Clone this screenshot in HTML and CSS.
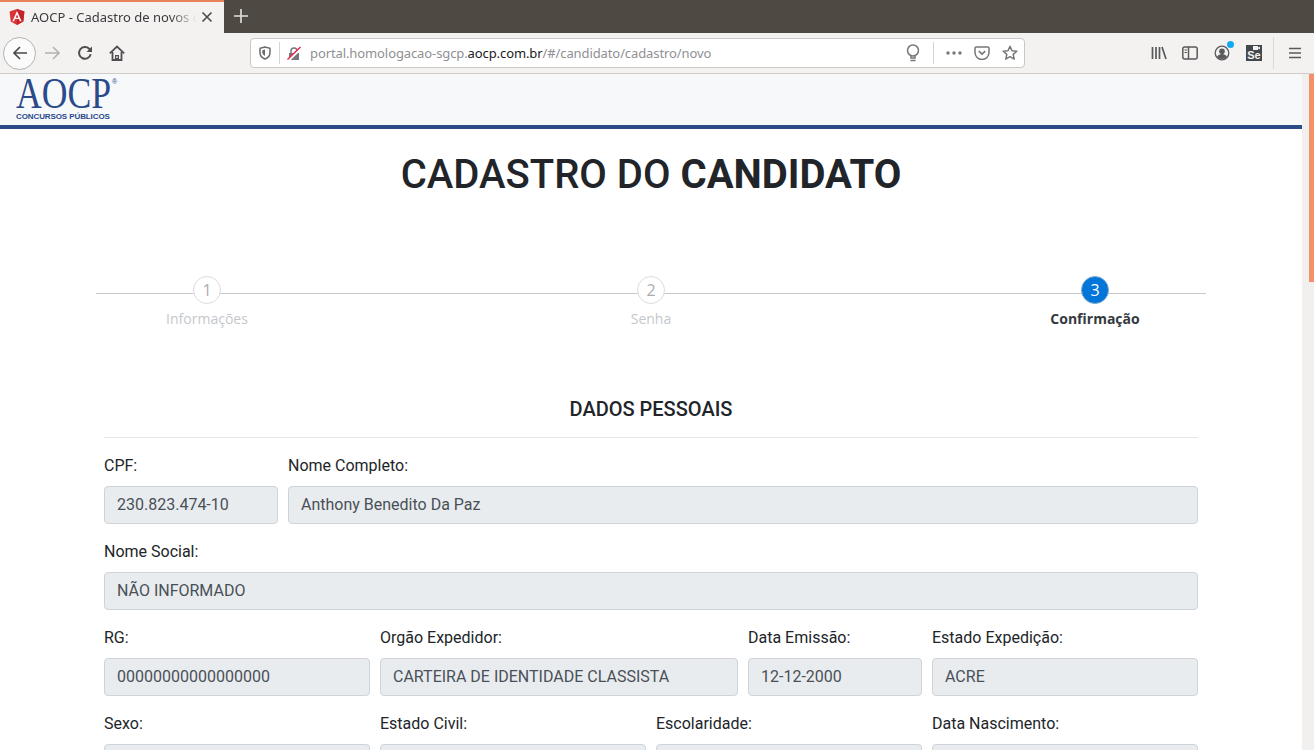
FILE: index.html
```html
<!DOCTYPE html>
<html lang="pt-BR">
<head>
<meta charset="utf-8">
<title>AOCP - Cadastro de novos candidatos</title>
<link rel="stylesheet" href="styles.css">
</head>
<body>
<div class="tabbar">
  <div class="tab">
    <svg class="favicon" viewBox="0 0 16 16"><path d="M8 0 .6 2.6l1.1 9.8L8 16l6.300-3.600 1.100-9.800z" fill="#dd3333"/><path d="M8 0v16l6.300-3.600 1.100-9.800z" fill="#c3242b"/><path d="M8 2 3.400 12.300h1.700l.9-2.300h4l.9 2.300h1.700zm-1.350 6.700L8 5.500l1.350 3.200z" fill="#fff"/></svg>
    <span class="tab-title">AOCP - Cadastro de novos c</span>
    <svg class="tab-close" viewBox="0 0 12 12"><path d="M1.500 1.500l9 9m0-9l-9 9" stroke="#4a4a4f" stroke-width="1.600" fill="none"/></svg>
  </div>
  <svg class="new-tab" viewBox="0 0 14 14"><path d="M7 0v14M0 7h14" stroke="#e4e2dd" stroke-width="1.600" fill="none"/></svg>
</div>
<div class="toolbar">
  <div class="nav-group">
    <button class="back" type="button" aria-label="Voltar"><svg viewBox="0 0 16 16"><path d="M15 8H2M8 2 2 8l6 6" stroke="#4a4a4f" stroke-width="1.700" fill="none"/></svg></button>
    <svg class="tool-icon forward" viewBox="0 0 16 16"><path d="M0 8h14M8 2l6 6-6 6" stroke="#b4b3b1" stroke-width="1.600" fill="none"/></svg>
    <svg class="tool-icon reload" viewBox="0 0 16 16"><path d="M13.700 9.300a5.900 5.900 0 1 1-1.500-5.500l1.800 1.800" stroke="#4f4f52" stroke-width="2" fill="none"/><path d="M15 1.500v5.500H9.500z" fill="#4f4f52"/></svg>
    <svg class="tool-icon home" viewBox="0 0 16 16"><path d="M.8 8.300 8 1.500l7.200 6.800" stroke="#4f4f52" stroke-width="1.800" fill="none"/><path d="M3.500 7v8h9V7" stroke="#4f4f52" stroke-width="1.800" fill="none"/><path d="M6 10h4v5H6z" fill="#4f4f52"/><path d="M7.200 11.200h1.600v1.800H7.200z" fill="#f3f2f0"/></svg>
  </div>
  <div class="urlbar">
    <svg class="url-shield" viewBox="0 0 14 14"><path d="M7 1 2 2.300v4.200c0 3.300 2.300 5.500 5 6.500 2.700-1 5-3.200 5-6.500V2.300z" stroke="#6b6b6d" stroke-width="1.500" fill="none"/><path d="M7 3.500v6.600c-1.500-.8-2.700-2-2.700-3.800V4.200z" fill="#6b6b6d"/></svg>
    <span class="url-sep"></span>
    <svg class="url-lock" viewBox="0 0 14 15"><path d="M4 7V5a3 3 0 0 1 6 0v2" stroke="#77777a" stroke-width="1.500" fill="none"/><path d="M2 7h10v7H2z" fill="#77777a"/><path d="M.5 15 14 2" stroke="#fff" stroke-width="3"/><path d="M.5 13.500 13.500 1" stroke="#f0234b" stroke-width="1.500"/></svg>
    <span class="url-text">portal.homologacao-sgcp.<b>aocp.com.br</b>/#/candidato/cadastro/novo</span>
    <svg class="url-bulb" viewBox="0 0 14 18"><circle cx="7" cy="6.500" r="5.500" stroke="#77777a" stroke-width="1.500" fill="none"/><path d="M5 12v2h4v-2M4.500 16.500h5" stroke="#77777a" stroke-width="1.500" fill="none"/></svg>
    <span class="url-sep url-sep-right"></span>
    <svg class="url-dots" viewBox="0 0 16 4"><circle cx="2" cy="2" r="1.700"/><circle cx="8" cy="2" r="1.700"/><circle cx="14" cy="2" r="1.700"/></svg>
    <svg class="url-pocket" viewBox="0 0 16 14"><path d="M2.200 1h11.600A1.200 1.200 0 0 1 15 2.200V6.500a7 7 0 0 1-14 0V2.200A1.200 1.200 0 0 1 2.200 1z" stroke="#77777a" stroke-width="1.500" fill="none"/><path d="M4.800 5.200 8 8.200l3.200-3" stroke="#77777a" stroke-width="1.700" fill="none"/></svg>
    <svg class="url-star" viewBox="0 0 16 16"><path d="m8 1.300 2 4.400 4.800.5-3.600 3.200 1 4.700L8 11.700l-4.200 2.400 1-4.700L1.200 6.200 6 5.700z" stroke="#77777a" stroke-width="1.500" fill="none" stroke-linejoin="round"/></svg>
  </div>
  <div class="right-tools">
    <svg class="library" viewBox="0 0 16 14"><path d="M1.500 1v12M5 1v12M8.500 1v12M11 1l4 12" stroke="#5a5a5c" stroke-width="1.700" fill="none"/></svg>
    <svg class="sidebar" viewBox="0 0 16 14"><rect x=".8" y="1" width="14.400" height="12" rx="2" stroke="#5a5a5c" stroke-width="1.500" fill="none"/><path d="M6.500 1v12" stroke="#5a5a5c" stroke-width="1.500"/><path d="M2.500 4h2.500M2.500 6.500h2.500" stroke="#5a5a5c" stroke-width="1"/></svg>
    <span class="account">
      <svg viewBox="0 0 16 16"><circle cx="8" cy="8" r="6.800" stroke="#5a5a5c" stroke-width="1.300" fill="none"/><circle cx="8" cy="6.300" r="2.800" fill="#5a5a5c"/><path d="M3 12c1.200-2.300 3-3 5-3s3.800.7 5 3c-1.300 1.300-3 2-5 2s-3.700-.7-5-2z" fill="#5a5a5c"/></svg>
      <span class="account-dot"></span>
    </span>
    <span class="selenium">Se<svg class="selenium-cam" viewBox="0 0 7 4"><path d="M0 0h5v4H0zM5 1.500 7 .5v3L5 2.500z" fill="#f3f2f0"/></svg></span>
    <span class="tool-sep"></span>
    <svg class="menu" viewBox="0 0 12 12"><path d="M0 1.500h12M0 6h12M0 10.500h12" stroke="#5a5a5c" stroke-width="1.500"/></svg>
  </div>
</div>
<div class="viewport">
  <main class="page">
    <header class="site-header">
      <div class="logo">
        <svg class="logo-mark" viewBox="0 0 102 30"><text class="logo-letters" x="0" y="29.500" textLength="95" lengthAdjust="spacingAndGlyphs">AOCP</text><text class="logo-reg" x="96" y="6">®</text></svg>
        <div class="logo-sub">CONCURSOS PÚBLICOS</div>
      </div>
    </header>
    <div class="container">
      <h1 class="title">CADASTRO DO <strong>CANDIDATO</strong></h1>
      <ol class="steps">
        <li class="step"><span class="step-num">1</span><span class="step-label">Informações</span></li>
        <li class="step"><span class="step-num">2</span><span class="step-label">Senha</span></li>
        <li class="step step-active"><span class="step-num">3</span><span class="step-label">Confirmação</span></li>
      </ol>
      <form class="form">
        <h2 class="section-title">DADOS PESSOAIS</h2>
        <div class="form-grid">
          <div class="field c2"><label>CPF:</label><div class="input">230.823.474-10</div></div>
          <div class="field c10"><label>Nome Completo:</label><div class="input">Anthony Benedito Da Paz</div></div>
          <div class="field c12"><label>Nome Social:</label><div class="input">NÃO INFORMADO</div></div>
          <div class="field c3"><label>RG:</label><div class="input">00000000000000000</div></div>
          <div class="field c4"><label>Orgão Expedidor:</label><div class="input">CARTEIRA DE IDENTIDADE CLASSISTA</div></div>
          <div class="field c2"><label>Data Emissão:</label><div class="input">12-12-2000</div></div>
          <div class="field c3"><label>Estado Expedição:</label><div class="input">ACRE</div></div>
          <div class="field c3"><label>Sexo:</label><div class="input"></div></div>
          <div class="field c3"><label>Estado Civil:</label><div class="input"></div></div>
          <div class="field c3"><label>Escolaridade:</label><div class="input"></div></div>
          <div class="field c3"><label>Data Nascimento:</label><div class="input"></div></div>
        </div>
      </form>
    </div>
  </main>
  <div class="scrollbar"><div class="scroll-thumb"></div></div>
</div>
</body>
</html>
```
FILE: styles.css
```css
* { box-sizing: border-box; }
html, body { height: 100%; }
body {
  margin: 0;
  height: 750px;
  overflow: hidden;
  display: flex;
  flex-direction: column;
  font-family: "Roboto", "Liberation Sans", sans-serif;
  color: #212529;
  background: #fff;
}
svg { display: block; flex: none; }

/* Browser tab strip */
.tabbar {
  height: 33px;
  flex: none;
  display: flex;
  align-items: center;
  padding-bottom: 1px;
  background: #4e4a43;
}
.tab {
  width: 224px;
  height: 33px;
  display: flex;
  align-items: center;
  padding: 0 11px 0 9px;
  background: #f3f2f0;
  border-top: 2px solid #e9825a;
}
.favicon { width: 16px; height: 16px; }
.tab-title {
  margin-left: 6px;
  width: 166px;
  font: 13px/18px "Noto Sans", sans-serif;
  color: #3a3a3d;
  white-space: nowrap;
  -webkit-mask-image: linear-gradient(to right, #000 84%, transparent 100%);
  mask-image: linear-gradient(to right, #000 84%, transparent 100%);
}
.tab-close { width: 12px; height: 12px; margin-left: 4px; }
.new-tab { width: 14px; height: 14px; margin-left: 10px; }

/* Browser toolbar */
.toolbar {
  height: 41px;
  flex: none;
  display: flex;
  align-items: center;
  background: #f3f2f0;
  border-bottom: 1px solid #cfcdca;
}
.nav-group { width: 250px; display: flex; align-items: center; padding-left: 3px; flex: none; }
.back {
  width: 33px;
  height: 33px;
  padding: 0;
  display: flex;
  align-items: center;
  justify-content: center;
  border: 1px solid #b1b1b1;
  border-radius: 50%;
  background: #fbfbfb;
}
.back svg { width: 16px; height: 16px; }
.tool-icon { width: 16px; height: 16px; }
.forward { margin-left: 9px; }
.reload { margin-left: 16px; }
.home { margin-left: 16px; }

.urlbar {
  width: 775px;
  height: 30px;
  flex: none;
  display: flex;
  align-items: center;
  padding: 0 6px 0 7px;
  background: #fff;
  border: 1px solid #c9c8c6;
  border-radius: 4px;
}
.url-shield { width: 14px; height: 14px; }
.url-sep { width: 1px; height: 22px; background: #d5d4d2; margin-left: 7px; }
.url-lock { width: 14px; height: 15px; margin-left: 7px; }
.url-text {
  margin-left: 9px;
  width: 596px;
  font: 13px/18px "Noto Sans", sans-serif;
  letter-spacing: -0.1px;
  color: #8f8f93;
  white-space: nowrap;
}
.url-text b { font-weight: 400; color: #1b1b24; }
.url-bulb { width: 14px; height: 18px; }
.url-sep-right { margin-left: 13px; }
.url-dots { width: 16px; height: 4px; margin-left: 12px; fill: #77777a; }
.url-pocket { width: 16px; height: 14px; margin-left: 12px; }
.url-star { width: 16px; height: 16px; margin-left: 12px; }

.right-tools { display: flex; align-items: center; flex: none; margin-left: 126px; }
.library { width: 16px; height: 14px; }
.sidebar { width: 16px; height: 14px; margin-left: 15px; }
.account { position: relative; width: 16px; height: 16px; margin-left: 16px; }
.account svg { width: 16px; height: 16px; }
.account-dot {
  position: absolute;
  top: -4px;
  right: -4px;
  width: 7px;
  height: 7px;
  border-radius: 50%;
  background: #12a9ef;
}
.selenium {
  position: relative;
  width: 16px;
  height: 16px;
  margin-left: 16px;
  padding-top: 5px;
  font: 700 11px/11px "Liberation Sans", sans-serif;
  text-align: center;
  color: #f3f2f0;
  background: #43484d;
}
.selenium-cam { position: absolute; top: 1px; right: 2px; width: 7px; height: 4px; }
.tool-sep { width: 1px; height: 32px; margin-left: 11px; background: #dcdbd9; }
.menu { width: 12px; height: 12px; margin-left: 15px; }

/* Page viewport */
.viewport { flex: 1; min-height: 0; display: flex; overflow: hidden; }
.page { flex: 1; min-width: 0; }
.scrollbar { width: 12px; flex: none; padding-left: 7px; background: #f1f0ef; }
.scroll-thumb { width: 5px; height: 208px; background: #f19268; }

.site-header {
  height: 55px;
  padding: 4px 0 0 16px;
  background: #f7f8fa;
  border-bottom: 4px solid #2b4c86;
}
.logo { width: 120px; color: #2a4a8a; }
.logo-mark { width: 102px; height: 30px; overflow: visible; }
.logo-letters { font-family: "Liberation Serif", serif; font-size: 44px; fill: #2a4a8a; }
.logo-reg { font-family: "Liberation Sans", sans-serif; font-size: 7px; fill: #2a4a8a; }
.logo-sub {
  margin-top: 4px;
  font: 700 8px/10px "Liberation Sans", sans-serif;
  letter-spacing: -0.1px;
  white-space: nowrap;
}

.container { width: 1110px; margin: 0 auto; }
.title {
  margin: 22px 0 0;
  height: 48px;
  font-size: 40px;
  line-height: 48px;
  font-weight: 500;
  text-align: center;
}
.title strong { font-weight: 700; }

.steps {
  position: relative;
  display: flex;
  justify-content: space-between;
  list-style: none;
  margin: 77px 0 0;
  padding: 0;
}
.steps::before {
  content: "";
  position: absolute;
  left: 0;
  right: 0;
  top: 17px;
  height: 1px;
  background: #c9c9c9;
}
.step {
  position: relative;
  width: 222px;
  display: flex;
  flex-direction: column;
  align-items: center;
  font-family: "Open Sans", sans-serif;
  color: #c4c8cc;
}
.step-num {
  width: 28px;
  height: 28px;
  display: flex;
  align-items: center;
  justify-content: center;
  font-size: 16px;
  color: #a9adb1;
  background: #fff;
  border: 1px solid #dcdcdc;
  border-radius: 50%;
}
.step-label { margin-top: 5px; font-size: 14px; line-height: 20px; }
.step-active { color: #343a40; }
.step-active .step-label { font-weight: 700; }
.step-active .step-num { color: #fff; background: #0275d8; border-color: #7fa9cf; }

.form { margin: 0 8px; padding-top: 68px; }
.section-title {
  margin: 0;
  height: 41px;
  font-size: 20px;
  line-height: 24px;
  font-weight: 500;
  text-align: center;
  border-bottom: 1px solid #e3e5e8;
}
.form-grid {
  display: grid;
  grid-template-columns: repeat(12, 1fr);
  column-gap: 10px;
  row-gap: 16px;
  padding-top: 16px;
}
.c2 { grid-column: span 2; }
.c3 { grid-column: span 3; }
.c4 { grid-column: span 4; }
.c10 { grid-column: span 10; }
.c12 { grid-column: span 12; }
.field label { display: block; margin-bottom: 8px; font-size: 16px; line-height: 24px; }
.input {
  height: 38px;
  padding: 6px 12px;
  font-size: 16px;
  line-height: 24px;
  color: #495057;
  background: #e9ecef;
  border: 1px solid #ced4da;
  border-radius: 4px;
  white-space: nowrap;
}
```
